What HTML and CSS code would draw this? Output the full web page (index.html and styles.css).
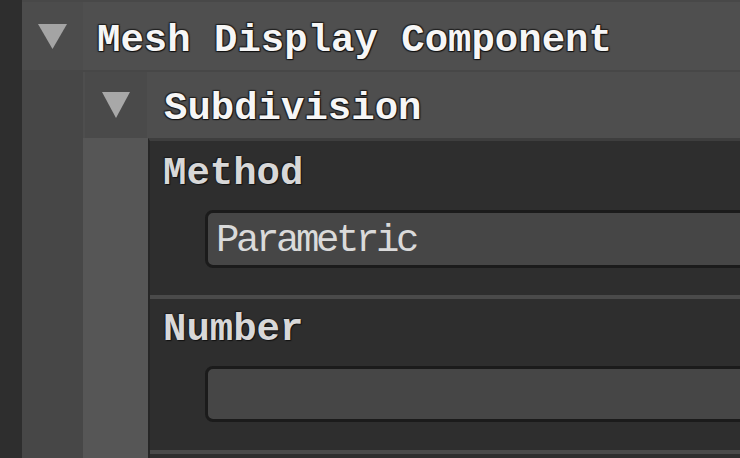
FILE: index.html
```html
<!DOCTYPE html>
<html lang="en">

<head>
    <meta charset="UTF-8">
    <meta name="viewport" content="width=device-width, initial-scale=1.0">
    <title>Mesh Display Component</title>
    <link rel="stylesheet" href="styles.css">
</head>

<body>
    <div class="panel">
        <div class="header outer-header">
            <div class="toggle">
                <svg width="29" height="25" viewBox="0 0 29 25"><polygon points="0,0 29,0 14.5,25" fill="#a4a4a4" /></svg>
            </div>
            <div class="title">Mesh Display Component</div>
        </div>

        <div class="body">
            <div class="indent"></div>
            <div class="section">
                <div class="header sub-header">
                    <div class="toggle">
                        <svg width="28" height="26" viewBox="0 0 28 26"><polygon points="0,0 28,0 14,26" fill="#a8a8a8" /></svg>
                    </div>
                    <div class="title">Subdivision</div>
                </div>

                <div class="body">
                    <div class="indent light"></div>
                    <div class="fields">
                        <div class="field">
                            <div class="label">Method</div>
                            <div class="dropdown">Parametric</div>
                        </div>
                        <div class="field">
                            <div class="label">Number</div>
                            <div class="number-input"></div>
                        </div>
                    </div>
                </div>
            </div>
        </div>
    </div>
</body>

</html>
```

FILE: styles.css
```css
body {
    margin: 0;
    height: 100vh;
    overflow: hidden;
    background-color: #2e2e2e;
    font-family: "Liberation Mono", "DejaVu Sans Mono", monospace;
}

.panel {
    margin-left: 22px;
    height: 100%;
    display: flex;
    flex-direction: column;
    background: #474747;
}

.header {
    display: flex;
    background: #4f4f4f;
}

.outer-header {
    height: 70px;
    border-top: 2px solid #484848;
    box-sizing: border-box;
}

.outer-header .toggle {
    width: 61px;
    background: #4c4c4c;
}

.toggle {
    display: flex;
    align-items: center;
    justify-content: center;
}

.title {
    font-size: 39px;
    line-height: 40px;
    font-weight: bold;
    color: #f6f6f6;
    white-space: nowrap;
    text-shadow: 1px 1px 1px #111, -1px -1px 1px #222, 1px -1px 1px #222, -1px 1px 1px #222;
}

.outer-header .title {
    padding: 19px 0 0 14px;
}

.body {
    flex: 1;
    display: flex;
}

.indent {
    width: 61px;
    background: #474747;
}

.indent.light {
    width: 65px;
    background: #565656;
}

.section {
    flex: 1;
    display: flex;
    flex-direction: column;
}

.sub-header {
    margin-top: 2px;
    height: 66px;
    background: #4e4e4e;
}

.sub-header .toggle {
    margin-left: 2px;
    width: 62px;
    background: #4a4a4a;
}

.sub-header .title {
    padding: 17px 0 0 17px;
}

.fields {
    flex: 1;
    background: #2e2e2e;
    border-left: 2px solid #262626;
    border-top: 3px solid #3e3e3e;
}

.field {
    padding: 13px 0 27px 13px;
    border-bottom: 4px solid #4a4a4a;
}

.field+.field {
    padding: 11px 0 28px 13px;
}

.label {
    font-size: 39px;
    line-height: 40px;
    font-weight: bold;
    color: #d8d8d8;
    text-shadow: 1px 1px 1px #111, -1px -1px 1px #1a1a1a;
}

.dropdown,
.number-input {
    margin: 16px -30px 0 42px;
    box-sizing: border-box;
    height: 58px;
    padding: 6px 8px 2px;
    background: #464646;
    border: 3px solid #1b1b1b;
    border-radius: 8px;
    font-size: 39px;
    line-height: 44px;
    letter-spacing: -3.4px;
    color: #dadada;
    white-space: nowrap;
}

.number-input {
    height: 56px;
}
```
